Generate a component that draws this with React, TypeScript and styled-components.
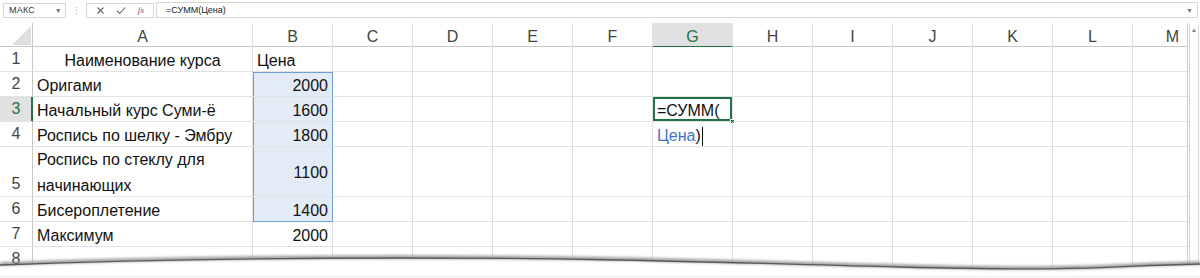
import React from "react";
import styled, { createGlobalStyle, css } from "styled-components";

const GlobalStyle = createGlobalStyle`
  html, body { margin: 0; padding: 0; background: #fff; }
  body { font-family: "Liberation Sans", Arial, sans-serif; }
  * { box-sizing: border-box; }
`;

const Page = styled.div`
  position: relative;
  width: 1200px;
  height: 278px;
  overflow: hidden;
  background: #fff;
`;

const FormulaBar = styled.div`
  display: flex;
  align-items: center;
  height: 20px;
  padding: 0 2px 0 3px;
  font-size: 9px;
  color: #444;
`;

const NameBox = styled.div`
  width: 63px;
  height: 15px;
  border: 1px solid #d6d6d6;
  display: flex;
  align-items: center;
  justify-content: space-between;
  padding: 0 3px 0 5px;
  color: #333;
  letter-spacing: 0.2px;
`;

const Caret = styled.span`
  font-size: 7px;
  color: #777;
`;

const Dots = styled.div`
  width: 20px;
  display: flex;
  flex-direction: column;
  align-items: center;
  gap: 2px;
  & > i {
    display: block;
    width: 1px;
    height: 1px;
    background: #aaa;
  }
`;

const FnBox = styled.div`
  width: 68px;
  height: 15px;
  border: 1px solid #d6d6d6;
  display: flex;
  align-items: center;
  justify-content: space-around;
  padding: 0 3px;
  color: #666;
`;

const FnItalic = styled.span`
  font-family: "Liberation Serif", serif;
  font-style: italic;
  font-size: 9px;
  color: #666;
`;

const FormulaInput = styled.div`
  flex: 1;
  height: 16px;
  margin-left: 2px;
  border: 1px solid #d6d6d6;
  display: flex;
  align-items: center;
  justify-content: space-between;
  padding: 0 4px 0 9px;
  color: #222;
`;

const SheetArea = styled.div`
  display: flex;
  margin-top: 3px;
`;

const GridClip = styled.div`
  width: 1187px;
  overflow: hidden;
`;

const Grid = styled.div`
  display: grid;
  grid-template-columns: 33px 220px 80px repeat(11, 80px);
  grid-template-rows: 24px 25px 25px 25px 25px 50px 25px 25px 25px;
  width: 1233px;
`;

type Align = "left" | "right" | "center";

const Cell = styled.div<{
  $align?: Align;
  $sel?: boolean;
  $selTop?: boolean;
  $selBottom?: boolean;
  $edit?: boolean;
}>`
  position: relative;
  display: flex;
  align-items: center;
  justify-content: ${(p) =>
    p.$align === "right" ? "flex-end" : p.$align === "center" ? "center" : "flex-start"};
  padding: 2px 4px 0 4px;
  border-right: 1px solid #e2e2e2;
  border-bottom: 1px solid #e2e2e2;
  font-size: 16px;
  line-height: 25px;
  color: #111;
  white-space: nowrap;
  ${(p) =>
    p.$sel &&
    css`
      background: #e3ebf7;
      border-right-color: #6f9ddc;
      box-shadow: inset 1px 0 0 #6f9ddc ${p.$selTop ? ", inset 0 1px 0 #6f9ddc" : ""};
      ${p.$selBottom ? "border-bottom-color: #6f9ddc;" : ""}
    `}
  ${(p) =>
    p.$edit &&
    css`
      box-shadow: inset 0 0 0 2px #217346;
      overflow: visible;
    `}
`;

const WrapText = styled.span`
  white-space: normal;
  line-height: 26px;
`;

const FillHandle = styled.span`
  position: absolute;
  right: -3px;
  bottom: -3px;
  width: 5px;
  height: 5px;
  background: #217346;
  border: 1px solid #fff;
`;

const RefText = styled.span`
  color: #4472c4;
`;

const TextCursor = styled.span`
  display: inline-block;
  width: 1px;
  height: 19px;
  background: #111;
  margin-left: 1px;
  vertical-align: middle;
`;

const ColHeader = styled.div<{ $active?: boolean }>`
  display: flex;
  align-items: center;
  justify-content: center;
  padding-top: 4px;
  border-right: 1px solid #e2e2e2;
  border-bottom: 1px solid ${(p) => (p.$active ? "#217346" : "#c8c8c8")};
  background: ${(p) => (p.$active ? "#e1e1e1" : "#fff")};
  color: ${(p) => (p.$active ? "#217346" : "#444")};
  font-size: 16px;
`;

const Corner = styled.div`
  border-right: 1px solid #c8c8c8;
  border-bottom: 1px solid #c8c8c8;
  display: flex;
  align-items: flex-end;
  justify-content: flex-end;
  padding: 0 1px 1px 0;
`;

const CornerTri = styled.div`
  width: 0;
  height: 0;
  border-left: 19px solid transparent;
  border-bottom: 19px solid #dedede;
`;

const RowHeader = styled.div<{ $active?: boolean }>`
  display: flex;
  align-items: flex-end;
  justify-content: center;
  line-height: 24px;
  padding-bottom: 0;
  border-right: 1px solid ${(p) => (p.$active ? "#217346" : "#c8c8c8")};
  border-bottom: 1px solid #e2e2e2;
  background: ${(p) => (p.$active ? "#e1e1e1" : "#fff")};
  color: ${(p) => (p.$active ? "#217346" : "#444")};
  font-size: 16px;
  ${(p) => p.$active && css`box-shadow: inset -1px 0 0 #217346;`}
`;

const Scrollbar = styled.div`
  width: 13px;
  border-left: 1px solid #d0d0d0;
  padding-left: 1px;
  display: flex;
  flex-direction: column;
`;

const Track = styled.div`
  flex: 1;
  width: 10px;
  margin-top: 2px;
  border-left: 1px solid #d6d6d6;
  border-right: 1px solid #d6d6d6;
  display: flex;
  flex-direction: column;
  align-items: center;
`;

const ArrowUp = styled.span`
  font-size: 6px;
  color: #777;
  margin-top: 2px;
`;

const Tear = styled.svg`
  position: absolute;
  left: 0;
  top: 248px;
  width: 1200px;
  height: 30px;
`;

const COLS = ["A", "B", "C", "D", "E", "F", "G", "H", "I", "J", "K", "L", "M"];

type RowDef = {
  n: number;
  a?: React.ReactNode;
  aAlign?: Align;
  b?: React.ReactNode;
  bAlign?: Align;
  sel?: boolean;
  selTop?: boolean;
  selBottom?: boolean;
  g?: React.ReactNode;
  gEdit?: boolean;
};

const ROWS: RowDef[] = [
  { n: 1, a: "Наименование курса", aAlign: "center", b: "Цена", bAlign: "left" },
  { n: 2, a: "Оригами", b: "2000", sel: true, selTop: true },
  { n: 3, a: "Начальный курс Суми-ё", b: "1600", sel: true, g: "=СУММ(", gEdit: true },
  {
    n: 4,
    a: "Роспись по шелку - Эмбру",
    b: "1800",
    sel: true,
    g: (
      <span>
        <RefText>Цена</RefText>)<TextCursor />
      </span>
    ),
  },
  {
    n: 5,
    a: (
      <WrapText>
        Роспись по стеклу для
        <br />
        начинающих
      </WrapText>
    ),
    b: "1100",
    sel: true,
  },
  { n: 6, a: "Бисероплетение", b: "1400", sel: true, selBottom: true },
  { n: 7, a: "Максимум", b: "2000" },
  { n: 8 },
];

export default function App() {
  return (
    <>
      <GlobalStyle />
      <Page>
        <FormulaBar>
          <NameBox>
            <span>МАКС</span>
            <Caret>▼</Caret>
          </NameBox>
          <Dots>
            <i />
            <i />
            <i />
          </Dots>
          <FnBox>
            <svg width="9" height="9" viewBox="0 0 9 9">
              <path d="M1.5 1.5 L7.5 7.5 M7.5 1.5 L1.5 7.5" stroke="#666" strokeWidth="1.1" />
            </svg>
            <svg width="10" height="9" viewBox="0 0 10 9">
              <path d="M1 4.8 L3.8 7.5 L9 1.5" stroke="#666" strokeWidth="1.1" fill="none" />
            </svg>
            <FnItalic>fx</FnItalic>
          </FnBox>
          <FormulaInput>
            <span>=СУММ(Цена)</span>
            <Caret>▼</Caret>
          </FormulaInput>
        </FormulaBar>
        <SheetArea>
          <GridClip>
            <Grid>
              <Corner>
                <CornerTri />
              </Corner>
              {COLS.map((c) => (
                <ColHeader key={c} $active={c === "G"}>
                  {c}
                </ColHeader>
              ))}
              {ROWS.map((r) => (
                <React.Fragment key={r.n}>
                  <RowHeader $active={r.n === 3}>{r.n}</RowHeader>
                  <Cell $align={r.aAlign ?? "left"}>{r.a}</Cell>
                  <Cell
                    $align={r.bAlign ?? "right"}
                    $sel={r.sel}
                    $selTop={r.selTop}
                    $selBottom={r.selBottom}
                  >
                    {r.b}
                  </Cell>
                  {COLS.slice(2).map((c) =>
                    c === "G" ? (
                      <Cell key={c} $edit={r.gEdit}>
                        {r.g}
                        {r.gEdit && <FillHandle />}
                      </Cell>
                    ) : (
                      <Cell key={c} />
                    )
                  )}
                </React.Fragment>
              ))}
            </Grid>
          </GridClip>
          <Scrollbar>
            <Track>
              <ArrowUp>▲</ArrowUp>
            </Track>
          </Scrollbar>
        </SheetArea>
        <Tear viewBox="0 0 1200 30" preserveAspectRatio="none">
          <defs>
            <filter id="blur" x="-5%" y="-200%" width="110%" height="500%">
              <feGaussianBlur stdDeviation="1.6" />
            </filter>
          </defs>
          <path
            d="M0 17 C 80 14, 200 10, 400 10 S 700 14, 900 19 S 1100 18, 1200 16 L1200 30 L0 30 Z"
            fill="#fff"
          />
          <path
            d="M0 16 C 80 13, 200 9, 400 9 S 700 13, 900 18 S 1100 17, 1200 15"
            stroke="#8a8a8a"
            strokeWidth="3"
            fill="none"
            filter="url(#blur)"
          />
          <path
            d="M0 17 C 80 14, 200 10, 400 10 S 700 14, 900 19 S 1100 18, 1200 16"
            stroke="#5a5a5a"
            strokeWidth="1.3"
            fill="none"
          />
          <path d="M0 28.5 L1200 28.5" stroke="#ececec" strokeWidth="1" />
        </Tear>
      </Page>
    </>
  );
}
